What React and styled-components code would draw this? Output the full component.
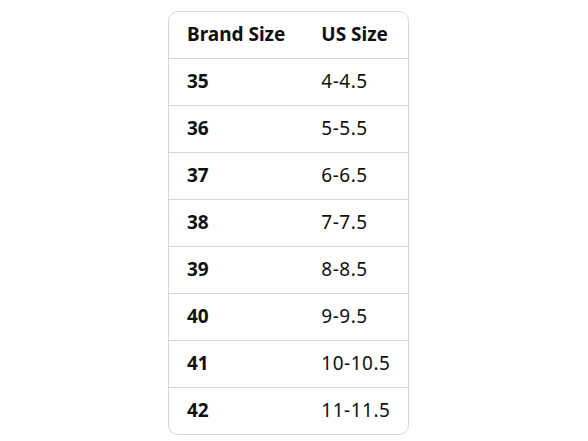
import React from 'react';
import styled, { createGlobalStyle } from 'styled-components';

const GlobalStyle = createGlobalStyle`
  html, body {
    margin: 0;
    padding: 0;
    background: #ffffff;
  }
  body {
    font-family: "Noto Sans", "Open Sans", Arial, sans-serif;
    color: #0f1111;
  }
`;

const Page = styled.div`
  width: 588px;
  height: 441px;
  padding: 11px 0 0 168px;
  box-sizing: border-box;
`;

const TableFrame = styled.div`
  display: inline-block;
  border: 1px solid #d5d9d9;
  border-radius: 10px;
  overflow: hidden;
`;

const Table = styled.table`
  border-collapse: collapse;
  font-size: 19px;
`;

const Row = styled.tr`
  height: ${p => (p.$header ? '46px' : '47px')};
  & + & {
    border-top: 1px solid #d5d9d9;
  }
`;

const Cell = styled.td`
  padding: 0 18px;
  text-align: left;
  white-space: nowrap;
  font-weight: ${p => (p.$bold ? 700 : 400)};
  letter-spacing: ${p => (p.$bold ? 0 : '0.5px')};
  line-height: 1;
`;

const sizes = [
  ['35', '4-4.5'],
  ['36', '5-5.5'],
  ['37', '6-6.5'],
  ['38', '7-7.5'],
  ['39', '8-8.5'],
  ['40', '9-9.5'],
  ['41', '10-10.5'],
  ['42', '11-11.5'],
];

export default function App() {
  return (
    <>
      <GlobalStyle />
      <Page>
        <TableFrame>
          <Table>
            <tbody>
              <Row $header>
                <Cell $bold>Brand Size</Cell>
                <Cell $bold>US Size</Cell>
              </Row>
              {sizes.map(([brand, us]) => (
                <Row key={brand}>
                  <Cell $bold>{brand}</Cell>
                  <Cell>{us}</Cell>
                </Row>
              ))}
            </tbody>
          </Table>
        </TableFrame>
      </Page>
    </>
  );
}
